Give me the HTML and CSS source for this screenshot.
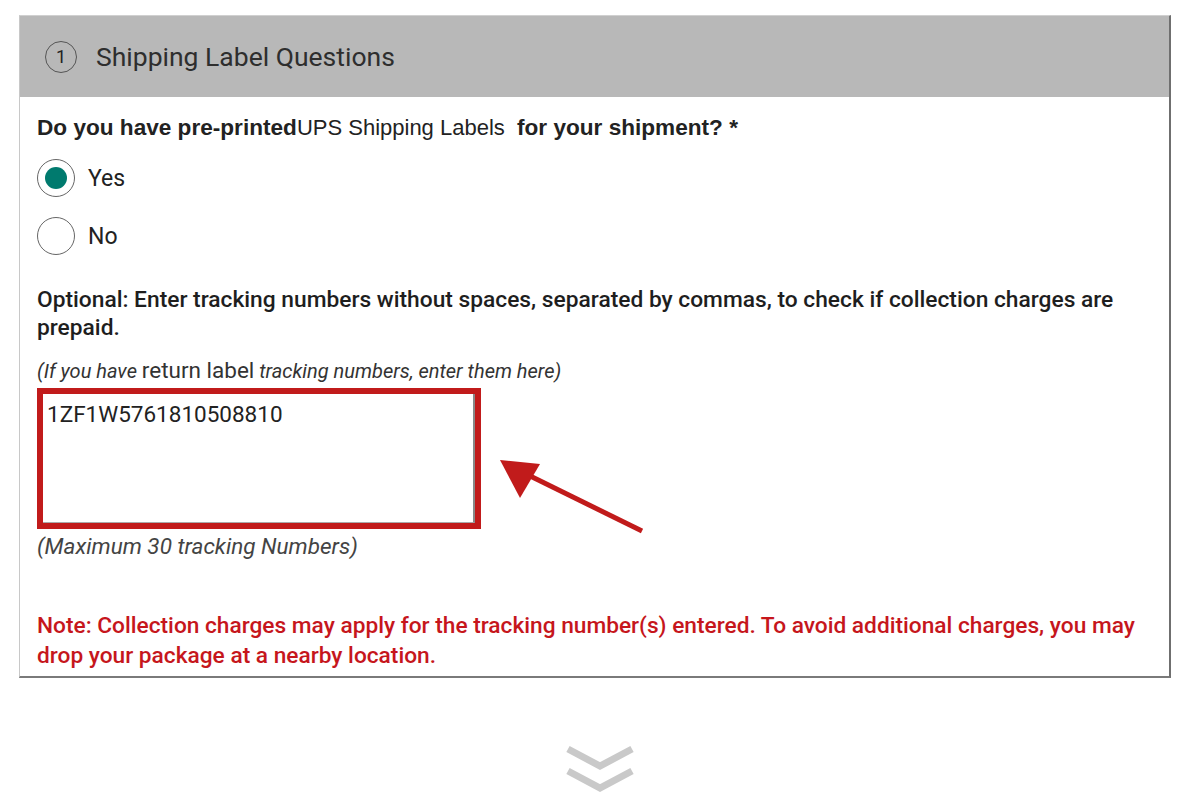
FILE: index.html
```html
<!DOCTYPE html>
<html>
<head>
<meta charset="utf-8">
<link rel="stylesheet" href="styles.css">
</head>
<body>
<div class="page">
  <section class="card">
    <header class="card-head">
      <span class="step">1</span>
      <h2 class="title">Shipping Label Questions</h2>
    </header>
    <div class="card-body">
      <p class="question"><b>Do you have pre-printed</b>UPS Shipping Labels&nbsp; <b>for your shipment? *</b></p>
      <div class="radios">
        <label class="radio"><span class="dot checked"></span><span>Yes</span></label>
        <label class="radio"><span class="dot"></span><span>No</span></label>
      </div>
      <p class="optional">Optional: Enter tracking numbers without spaces, separated by commas, to check if collection charges are prepaid.</p>
      <p class="hint">(If you have <span class="upright">return label</span> tracking numbers, enter them here)</p>
      <div class="field-row">
        <div class="highlight">
          <div class="textarea">1ZF1W5761810508810</div>
        </div>
        <svg class="arrow" width="170" height="90" viewBox="0 0 170 90">
          <line x1="158" y1="78" x2="36" y2="18" stroke="#c11b1b" stroke-width="5"/>
          <polygon points="16,7 56,11 36,45" fill="#c11b1b"/>
        </svg>
      </div>
      <p class="max">(Maximum 30 tracking Numbers)</p>
      <p class="note">Note: Collection charges may apply for the tracking number(s) entered. To avoid additional charges, you may drop your package at a nearby location.</p>
    </div>
  </section>
  <div class="more">
    <svg width="70" height="50" viewBox="0 0 70 50">
      <polyline points="3,5 35,22 67,5" fill="none" stroke="#c9c9c9" stroke-width="7"/>
      <polyline points="3,27 35,44 67,27" fill="none" stroke="#c9c9c9" stroke-width="7"/>
    </svg>
  </div>
</div>
</body>
</html>
```

FILE: styles.css
```css
html, body {
  margin: 0;
  padding: 0;
  background: #ffffff;
}
body {
  font-family: Roboto, "Liberation Sans", Arial, sans-serif;
  color: #222;
}
.page {
  padding: 15px 21px 0 19px;
}
.card {
  border: 1px solid #c8c8c8;
  border-right: 2px solid #6f6f6f;
  border-bottom: 2px solid #7a7a7a;
  border-top-color: #d0d0d0;
}
.card-head {
  background: #b8b8b8;
  height: 81px;
  display: flex;
  align-items: center;
  padding-left: 25px;
  gap: 19px;
}
.step {
  width: 32px;
  height: 32px;
  border: 1.5px solid #555;
  border-radius: 50%;
  display: flex;
  align-items: center;
  justify-content: center;
  font-size: 18px;
  color: #222;
  box-sizing: border-box;
}
.title {
  margin: 0;
  font-weight: 400;
  font-size: 26.5px;
  color: #2e2e2e;
}
.card-body {
  padding: 16px 17px 5px 17px;
}
.question {
  margin: 0;
  font-family: "Liberation Sans", Arial, sans-serif;
  font-size: 22px;
  line-height: 30px;
  color: #222;
}
.question b {
  font-weight: 700;
  font-size: 22.6px;
}
.radios {
  display: flex;
  flex-direction: column;
  gap: 20px;
  margin-top: 16px;
}
.radio {
  display: flex;
  align-items: center;
  gap: 13px;
  font-size: 23px;
  color: #222;
}
.dot {
  width: 38px;
  height: 38px;
  border-radius: 50%;
  border: 1.5px solid #666;
  box-sizing: border-box;
  display: flex;
  align-items: center;
  justify-content: center;
}
.dot.checked::after {
  content: "";
  width: 22px;
  height: 22px;
  border-radius: 50%;
  background: #007a6e;
}
.optional {
  margin: 31px 0 0;
  font-size: 22.75px;
  font-weight: 500;
  line-height: 28px;
  color: #1e1e1e;
}
.hint {
  margin: 16px 0 0;
  font-size: 20px;
  font-style: italic;
  color: #333;
  line-height: 24px;
}
.hint .upright {
  font-style: normal;
  font-size: 22.5px;
}
.field-row {
  position: relative;
  display: flex;
  align-items: flex-start;
  margin-top: 5px;
}
.highlight {
  width: 432px;
  height: 129px;
  border: 6px solid #c11b1b;
}
.textarea {
  height: 100%;
  box-sizing: border-box;
  border-right: 2px solid #888;
  border-bottom: 1px solid #aaa;
  padding: 7px 4px;
  font-size: 22.5px;
  color: #222;
}
.arrow {
  position: absolute;
  left: 447px;
  top: 65px;
}
.max {
  margin: 4px 0 0;
  font-size: 22.5px;
  font-style: italic;
  color: #444;
  line-height: 26px;
}
.note {
  margin: 52px 0 0;
  font-size: 22.7px;
  font-weight: 500;
  line-height: 30px;
  color: #c6161c;
}
.more {
  display: flex;
  justify-content: center;
  padding-top: 66px;
  padding-left: 10px;
}
```
